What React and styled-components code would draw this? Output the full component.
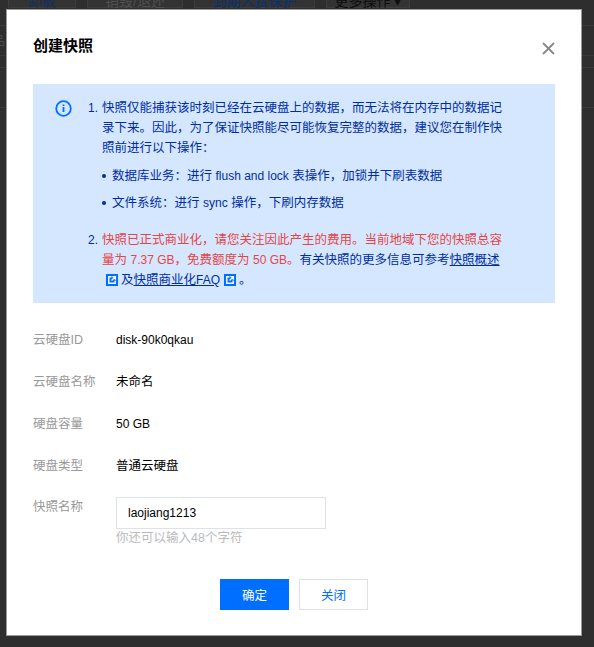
import React from "react";
import styled, { createGlobalStyle } from "styled-components";

const Global = createGlobalStyle`
  html, body { margin: 0; padding: 0; background: #2e2e2e; }
  body { width: 594px; height: 647px; overflow: hidden; font-family: "Liberation Sans", "Noto Sans CJK SC", sans-serif; }
`;
const Stage = styled.div`
  width: 594px; height: 647px; position: relative; overflow: hidden;
  background:
    linear-gradient(#3a3a3a, #3a3a3a) 0 25px / 100% 1px no-repeat,
    linear-gradient(#3a3a3a, #3a3a3a) 0 55px / 100% 1px no-repeat,
    linear-gradient(#3a3a3a, #3a3a3a) 0 67px / 100% 1px no-repeat,
    linear-gradient(#3a3a3a, #3a3a3a) 0 107px / 100% 1px no-repeat,
    #2e2e2e;
`;
const BackTabs = styled.div`
  position: absolute; left: 8px; top: -8px; display: flex; gap: 11px; height: 16px;
`;
const BackTab = styled.div`
  width: ${p => p.$w}px; box-sizing: border-box; text-align: center; font-size: 14px; line-height: 16px;
  color: ${p => p.$c}; background: #333; border: 1px solid #3d3d3d; white-space: nowrap;
`;
const BackCell = styled.div`
  position: absolute; left: -8px; top: 34px; font-size: 13px; line-height: 14px; color: #4c4c4c;
`;
const Dialog = styled.div`
  position: absolute; left: 7px; top: 10px; width: 574px; height: 625px; box-sizing: border-box;
  background: #fff; padding: 27px 26px 0; box-shadow: 0 0 0 1px #999;
`;
const Header = styled.div`
  display: flex; justify-content: space-between; align-items: center; height: 18px; margin-bottom: 29px;
`;
const Title = styled.h2`
  margin: 0; font-size: 15px; line-height: 18px; font-weight: 700; color: #000;
`;
const Close = styled.svg` width: 13px; height: 13px; margin-top: 5px; display: block; `;
const Notice = styled.div`
  background: #d5e7ff; height: 219px; box-sizing: border-box; padding: 14px 22px 0; display: flex;
  color: #002da0; font-size: 12.5px; line-height: 20px;
`;
const InfoIcon = styled.svg` width: 17px; height: 17px; flex: none; margin: 2px 16px 0 0; `;
const Num = styled.span` flex: none; width: 14px; font-size: 12px; `;
const Item = styled.div` display: flex; width: 424px; `;
const Body = styled.div` width: 410px; `;
const Bullets = styled.ul`
  margin: 8px 0 17px; padding: 0 0 0 10px; list-style: none;
`;
const Bullet = styled.li`
  position: relative; margin-bottom: 7px;
  &:last-child { margin-bottom: 0; }
  &::before { content: ""; position: absolute; left: -10px; top: 8px; width: 4px; height: 4px; border-radius: 50%; background: #002da0; }
`;
const Lat = styled.span` font-size: 12px; `;
const Red = styled.span` color: #e54545; `;
const Link = styled.a` color: #002da0; text-decoration: underline; `;
const ExtIcon = styled.svg` width: 12px; height: 12px; vertical-align: -2px; margin: 0 3px 0 4px; `;
const Form = styled.div` margin-top: 27px; `;
const Row = styled.div` display: flex; height: ${p => p.$h || 42}px; `;
const Label = styled.div` width: 83px; font-size: 12.5px; line-height: 21px; color: #999; `;
const Value = styled.div` font-size: 12.5px; line-height: 21px; color: #000; `;
const Input = styled.div`
  width: 210px; height: 32px; box-sizing: border-box; border: 1px solid #dde1ea; padding: 0 11px;
  font-size: 12px; line-height: 30px; color: #000;
`;
const Hint = styled.div` font-size: 12.5px; line-height: 18px; color: #bbb; `;
const Footer = styled.div` display: flex; justify-content: center; gap: 10px; margin-top: 32px; `;
const Btn = styled.button`
  width: 69px; height: 31px; box-sizing: border-box; font: inherit; font-size: 12.5px; padding: 0;
  border: 1px solid ${p => (p.$primary ? "#006eff" : "#dde1ea")};
  background: ${p => (p.$primary ? "#006eff" : "#fff")};
  color: ${p => (p.$primary ? "#fff" : "#006eff")};
`;

const Ext = () => (
  <ExtIcon viewBox="0 0 12 12">
    <rect width="12" height="12" fill="#006eff" />
    <path d="M5.5 2.8H2.8v6.4h6.4V6.5M5.5 6.5L9 3M6.3 2.6h3.1v3.1" fill="none" stroke="#fff" strokeWidth="1.4" />
  </ExtIcon>
);

export default function App() {
  return (
    <Stage>
      <Global />
      <BackTabs>
        <BackTab $w={68} $c="#14305c">卸载</BackTab>
        <BackTab $w={96} $c="#505050">销毁/退还</BackTab>
        <BackTab $w={121} $c="#0a3070">到期人费保护</BackTab>
        <BackTab $w={84} $c="#0d0d0d">更多操作 ▾</BackTab>
      </BackTabs>
      <BackCell>品</BackCell>
      <Dialog>
        <Header>
          <Title>创建快照</Title>
          <Close viewBox="0 0 13 13"><path d="M1 1l11 11M12 1L1 12" stroke="#888" strokeWidth="1.8" /></Close>
        </Header>
        <Notice>
          <InfoIcon viewBox="0 0 17 17">
            <circle cx="8.5" cy="8.5" r="7.3" fill="none" stroke="#006eff" strokeWidth="1.8" />
            <path d="M8.5 7v5M8.5 4.4v1.6" stroke="#006eff" strokeWidth="1.8" />
          </InfoIcon>
          <div>
            <Item>
              <Num>1.</Num>
              <Body>
                快照仅能捕获该时刻已经在云硬盘上的数据，而无法将在内存中的数据记录下来。因此，为了保证快照能尽可能恢复完整的数据，建议您在制作快照前进行以下操作：
                <Bullets>
                  <Bullet>数据库业务：进行 <Lat>flush and lock</Lat> 表操作，加锁并下刷表数据</Bullet>
                  <Bullet>文件系统：进行 <Lat>sync</Lat> 操作，下刷内存数据</Bullet>
                </Bullets>
              </Body>
            </Item>
            <Item>
              <Num>2.</Num>
              <Body>
                <Red>快照已正式商业化，请您关注因此产生的费用。当前地域下您的快照总容量为 <Lat>7.37 GB</Lat>，免费额度为 <Lat>50 GB</Lat>。</Red>
                有关快照的更多信息可参考<Link>快照概述</Link><Ext />及<Link>快照商业化<Lat>FAQ</Lat></Link><Ext />。
              </Body>
            </Item>
          </div>
        </Notice>
        <Form>
          <Row><Label>云硬盘ID</Label><Value><Lat>disk-90k0qkau</Lat></Value></Row>
          <Row><Label>云硬盘名称</Label><Value>未命名</Value></Row>
          <Row><Label>硬盘容量</Label><Value><Lat>50 GB</Lat></Value></Row>
          <Row $h={41}><Label>硬盘类型</Label><Value>普通云硬盘</Value></Row>
          <Row $h={50}>
            <Label>快照名称</Label>
            <div>
              <Input>laojiang1213</Input>
              <Hint>你还可以输入48个字符</Hint>
            </div>
          </Row>
        </Form>
        <Footer>
          <Btn $primary>确定</Btn>
          <Btn>关闭</Btn>
        </Footer>
      </Dialog>
    </Stage>
  );
}
